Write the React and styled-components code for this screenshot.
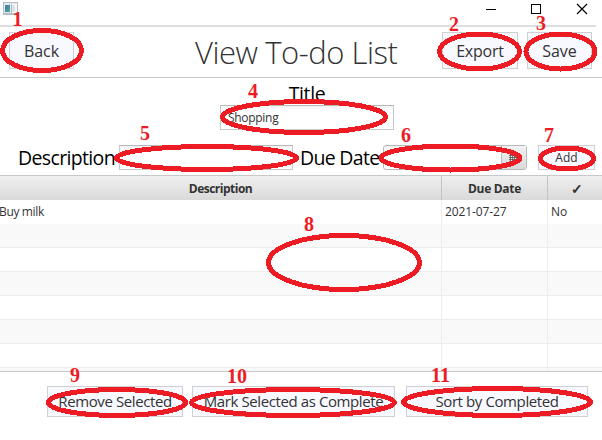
import React from 'react';
import styled, { createGlobalStyle } from 'styled-components';

const GlobalStyle = createGlobalStyle`
  * { box-sizing: border-box; }
  body { margin: 0; background: #fff; overflow: hidden; }
`;

const Window = styled.div`
  position: relative;
  width: 602px;
  height: 440px;
  overflow: hidden;
  display: flex;
  flex-direction: column;
  background: #fff;
  color: #333;
  font-family: "Open Sans", "Noto Sans", sans-serif;
`;

const TitleBar = styled.div`
  display: flex;
  justify-content: space-between;
  flex: none;
  width: 596px;
  height: 27px;
  padding: 0 8px 0 3px;
  border-bottom: 2px solid #dedede;
`;

const Controls = styled.svg`
  width: 104px;
  height: 20px;
`;

const Header = styled.header`
  display: flex;
  flex: none;
  align-items: flex-start;
  height: 51px;
  padding: 5px 10px 0 9px;
  border-bottom: 1px solid #c8c8c8;
`;

const Heading = styled.h1`
  flex: 1;
  margin: 0;
  padding-left: 121px;
  white-space: nowrap;
  font-weight: 300;
  font-size: 31px;
  line-height: 41px;
  letter-spacing: -0.45px;
`;

const Button = styled.button`
  flex: none;
  width: ${(p) => p.$w}px;
  height: ${(p) => p.$h}px;
  margin: 0 0 0 ${(p) => p.$gap || 0}px;
  padding: 0;
  border: 1px solid #d0d0d2;
  background: #f8f8ff;
  color: #333;
  font-family: inherit;
  font-size: ${(p) => p.$size}px;
  letter-spacing: ${(p) => p.$track || 0}px;
  line-height: 1;
  white-space: nowrap;
`;

const TitleGroup = styled.div`
  display: flex;
  flex: none;
  flex-direction: column;
  align-items: center;
  width: 174px;
  height: 67px;
  margin-left: 220px;
  padding-top: 3px;
`;

const Label = styled.label`
  flex: none;
  width: ${(p) => (p.$w ? `${p.$w}px` : 'auto')};
  height: 24px;
  padding-left: ${(p) => p.$pad || 0}px;
  line-height: 25px;
  font-size: 19.5px;
  letter-spacing: ${(p) => p.$track || 0}px;
  color: #000;
  white-space: nowrap;
`;

const Field = styled.div`
  flex: none;
  width: 174px;
  height: 25px;
  padding-left: 7px;
  border: 1px solid #c8c8c8;
  border-top-color: #b8b8b8;
  background: linear-gradient(#f2f2f2, #fff 5px);
  font-size: 12px;
  line-height: 24px;
  letter-spacing: -0.3px;
`;

const EntryRow = styled.div`
  display: flex;
  flex: none;
  height: 30px;
  padding-left: 18px;
`;

const DatePicker = styled.div`
  display: flex;
  justify-content: flex-end;
  width: 144px;
  height: 25px;
  border: 1px solid #b9b9b9;
  border-radius: 3px;
  background: linear-gradient(#f2f2f2, #fff 5px);
`;

const CalendarButton = styled.div`
  display: flex;
  align-items: center;
  width: 25px;
  padding-left: 7px;
  border-left: 1px solid #b9b9b9;
  background: linear-gradient(#f2f2f2, #d9d9d9);
`;

const Table = styled.div`
  display: flex;
  flex: none;
  flex-direction: column;
  height: 197px;
  overflow: hidden;
  border-top: 1px solid #c8c8c8;
  border-bottom: 1px solid #c8c8c8;
`;

const TableRow = styled.div`
  display: grid;
  flex: none;
  grid-template-columns: 442px 106px 54px;
  height: 24px;
  font-size: 12px;
  line-height: 24px;
  background: ${(p) => (p.$odd ? '#f9f9f9' : '#fff')};
`;

const HeadRow = styled(TableRow)`
  background: linear-gradient(#f0f0f0, #d9d9d9);
  font-weight: 700;
  text-align: center;
`;

const HeadCell = styled.div`
  border-right: 1px solid #c4c4c4;
  border-bottom: 1px solid #c4c4c4;
  font-size: ${(p) => p.$size || 12}px;
  line-height: 26px;
  letter-spacing: ${(p) => p.$track || 0}px;
  &:last-child { padding-left: 3px; border-right: 0; }
`;

const Cell = styled.div`
  padding-left: ${(p) => p.$pad || 0}px;
  border-right: 1px solid #ededed;
  border-bottom: 1px solid #ededed;
  letter-spacing: ${(p) => p.$track || 0}px;
  white-space: nowrap;
  &:first-child { text-indent: -1px; }
  &:last-child { border-right: 0; }
`;

const Footer = styled.footer`
  display: flex;
  align-items: flex-start;
  padding: 14px 0 0 47px;
`;

const Annotations = styled.svg`
  position: absolute;
  inset: 0;
  pointer-events: none;
  fill: #ed1c24;
  font: bold 20px "Liberation Serif", serif;
`;

const Ring = styled.ellipse`
  fill: none;
  stroke: #ed1c24;
  stroke-width: 5px;
  shape-rendering: crispEdges;
`;

// cx, cy, rx, ry, number x, number baseline
const marks = [
  [42, 50.5, 39.5, 20, 12.5, 26],
  [479.5, 51.5, 40, 17.5, 449, 31],
  [560.5, 51.5, 34.5, 17.5, 536, 30],
  [304, 117, 81.5, 15.5, 248, 98],
  [206.5, 158, 90, 11.5, 140, 140],
  [450.5, 158, 69.5, 12, 401, 142],
  [567, 158.5, 26.5, 10.5, 544, 142],
  [344, 262.5, 75.5, 27, 304, 231],
  [117, 402.5, 68.5, 13, 70, 382],
  [293, 402.5, 101.5, 13, 227, 383],
  [497, 402, 93.5, 13.5, 431, 382],
];

const rows = [['Buy milk', '2021-07-27', 'No'], ...Array.from({ length: 7 }, () => ['', '', ''])];

export default function App() {
  return (
    <>
      <GlobalStyle />
      <Window>
        <TitleBar>
          <svg width="16" height="16" shapeRendering="crispEdges">
            <path d="M0 2h15v13H0z" fill="#b9bcc0" />
            <path d="M1 3h13v1H1z" fill="#e4e7ea" />
            <path d="M1 4h7v9H1z" fill="#dfeaf0" />
            <path d="M2 5h5v7H2z" fill="#4596a0" />
            <path d="M2 5h3v4H2z" fill="#4d83a9" />
            <path d="M5 9h2v3H5z" fill="#4aa785" />
            <path d="M9 4h5v9H9z" fill="#f7f7f7" />
            <path d="M9 5h3v7H9z" fill="#dce4e7" />
          </svg>
          <Controls viewBox="0 0 104 20" stroke="#000" fill="none">
            <path d="M2 9.5h10M47.5 4.5h9v9h-9z" shapeRendering="crispEdges" />
            <path d="M93 4l10 10M103 4L93 14" strokeWidth="1.2" />
          </Controls>
        </TitleBar>
        <Header>
          <Button $w={65} $h={37} $size={16} $track={-0.1}>Back</Button>
          <Heading>View To-do List</Heading>
          <Button $w={76} $h={37} $size={16} $track={-0.2}>Export</Button>
          <Button $w={65} $h={37} $size={16} $track={0} $gap={9}>Save</Button>
        </Header>
        <TitleGroup>
          <Label $track={-0.4}>Title</Label>
          <Field>Shopping</Field>
        </TitleGroup>
        <EntryRow>
          <Label $w={101} $track={-0.65}>Description</Label>
          <Field />
          <Label as="span" $w={90} $pad={7} $track={-0.7}>Due Date</Label>
          <DatePicker>
            <CalendarButton>
              <svg width="8" height="8" shapeRendering="crispEdges">
                <path d="M0 1h8M0 3h8M0 5h8M0 7h6M1 1v7M3 1v7M5 1v7M7 1v6" stroke="#555" strokeWidth=".8" />
              </svg>
            </CalendarButton>
          </DatePicker>
          <Button $w={57} $h={25} $size={12} $gap={11}>Add</Button>
        </EntryRow>
        <Table>
          <HeadRow>
            <HeadCell $track={-0.5}>Description</HeadCell>
            <HeadCell $track={-0.3}>Due Date</HeadCell>
            <HeadCell $size={14}>✓</HeadCell>
          </HeadRow>
          {rows.map(([description, due, done], i) => (
            <TableRow key={i} $odd={i % 2 === 1}>
              <Cell $track={-0.35}>{description}</Cell>
              <Cell $pad={3} $track={-0.1}>{due}</Cell>
              <Cell $pad={3} $track={-0.1}>{done}</Cell>
            </TableRow>
          ))}
        </Table>
        <Footer>
          <Button $w={136} $h={31} $size={15} $track={-0.4}>Remove Selected</Button>
          <Button $w={203} $h={31} $size={15} $track={-0.4} $gap={9}>Mark Selected as Complete</Button>
          <Button $w={182} $h={31} $size={15} $track={-0.4} $gap={11}>Sort by Completed</Button>
        </Footer>
        <Annotations width="602" height="440">
          {marks.map(([cx, cy, rx, ry, x, y], i) => (
            <g key={i}>
              <Ring cx={cx} cy={cy} rx={rx} ry={ry} />
              <text x={x} y={y}>{i + 1}</text>
            </g>
          ))}
        </Annotations>
      </Window>
    </>
  );
}
